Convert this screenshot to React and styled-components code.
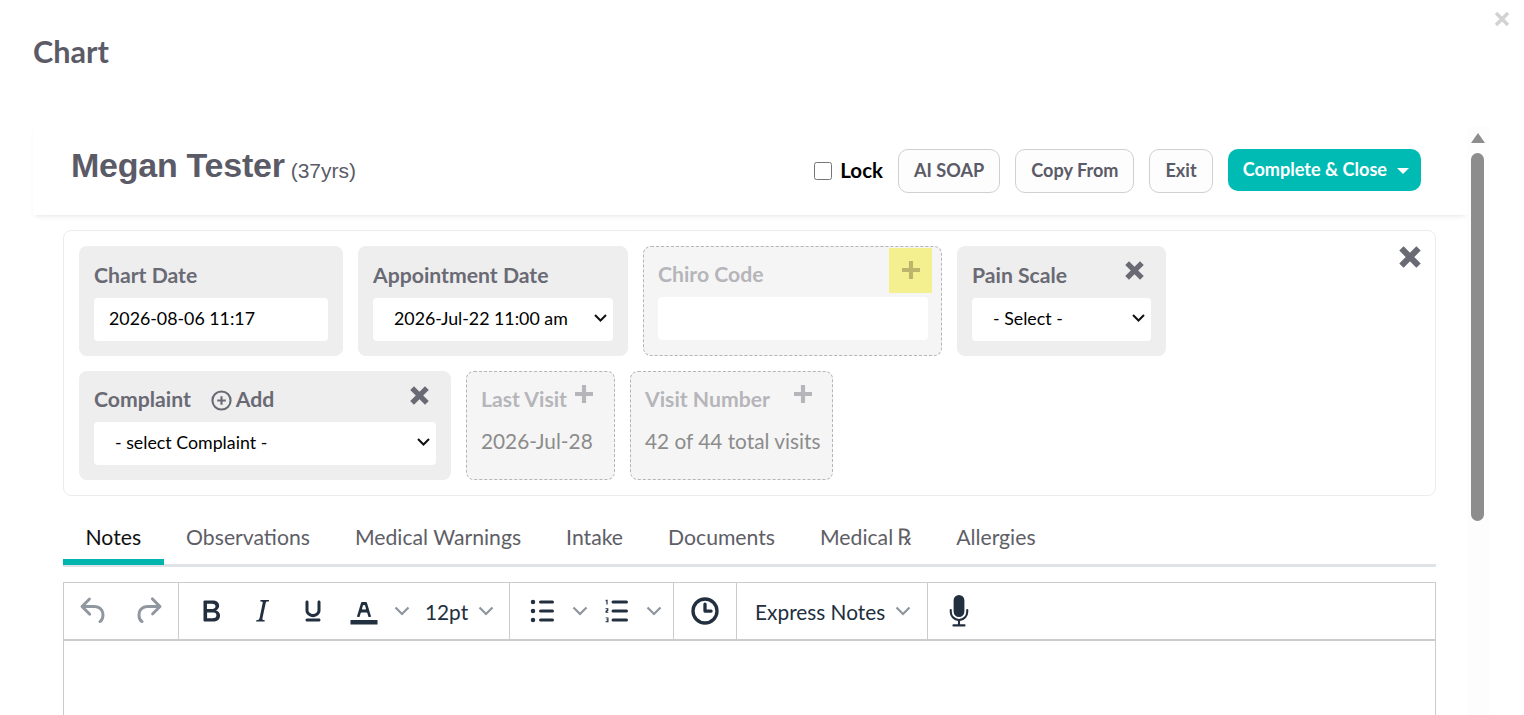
import styled, { createGlobalStyle } from "styled-components"

const GlobalStyle = createGlobalStyle`
    html, body {
        margin: 0;
        height: 715px;
        overflow: hidden;
        background: #fff;
        font-family: 'Lato', sans-serif;
    }
    * { box-sizing: border-box; }
`

const ICONS = {
    undo: "M6.4 8H12c3.7 0 6.2 2 6.8 5.1.6 2.7-.4 5.6-2.3 6.8a1 1 0 0 1-1-1.8c1.1-.6 1.8-2.7 1.4-4.6-.5-2.1-2.1-3.5-4.9-3.5H6.4l3.3 3.3a1 1 0 1 1-1.4 1.4l-5-5a1 1 0 0 1 0-1.4l5-5a1 1 0 0 1 1.4 1.4L6.4 8z",
    redo: "M17.6 10H12c-2.8 0-4.4 1.4-4.9 3.5-.4 2 .3 4 1.4 4.6a1 1 0 1 1-1 1.8c-2-1.2-2.9-4.1-2.3-6.8.6-3 3-5.1 6.8-5.1h5.6l-3.3-3.3a1 1 0 1 1 1.4-1.4l5 5a1 1 0 0 1 0 1.4l-5 5a1 1 0 0 1-1.4-1.4l3.3-3.3z",
    bold: "M7.8 19c-.3 0-.5 0-.6-.2l-.2-.5V5.7c0-.2 0-.4.2-.5l.6-.2h5c1.5 0 2.7.3 3.5 1 .7.6 1.1 1.4 1.1 2.5a3 3 0 0 1-.6 1.9c-.4.6-1 1-1.6 1.2.4.1.9.3 1.3.6s.8.7 1 1.2c.4.4.5 1 .5 1.6 0 1.3-.4 2.3-1.3 3-.8.7-2.1 1-3.8 1H7.8zm5-8.3c.6 0 1.2-.1 1.6-.5.4-.3.6-.7.6-1.3 0-1.1-.8-1.7-2.3-1.7H9.3v3.5h3.4zm.5 6c.7 0 1.3-.1 1.7-.4.4-.4.6-.9.6-1.5s-.2-1-.7-1.4c-.4-.3-1-.4-2-.4H9.4v3.8h4z",
    italic: "M16.7 4.7l-.1.9h-.3c-.6 0-1 0-1.4.3-.3.3-.4.6-.5 1.1l-2.1 9.8v.6c0 .5.4.8 1.4.8h.2l-.2.8H8l.2-.8h.2c1.1 0 1.8-.5 2-1.5l2-9.8.1-.5c0-.6-.4-.8-1.4-.8h-.3l.2-.9h5.8z",
    underline: "M16 5c.6 0 1 .4 1 1v5.5a4 4 0 0 1-.4 1.8l-1 1.4a5.3 5.3 0 0 1-5.5 1 5 5 0 0 1-1.6-1c-.5-.4-.8-.9-1.1-1.4a4 4 0 0 1-.4-1.8V6c0-.6.4-1 1-1s1 .4 1 1v5.5c0 .3 0 .6.2 1l.6.7a3.3 3.3 0 0 0 2.2.8 3.4 3.4 0 0 0 2.2-.8c.3-.2.4-.5.6-.8l.2-.9V6c0-.6.4-1 1-1zM8 17h8c.6 0 1 .4 1 1s-.4 1-1 1H8a1 1 0 0 1 0-2z",
    color: "M3 18h18v3H3zM8.7 16h-.8a.5.5 0 0 1-.5-.6l2.7-9c.1-.3.3-.4.5-.4h2.8c.2 0 .4.1.5.4l2.7 9a.5.5 0 0 1-.5.6h-.8a.5.5 0 0 1-.4-.4l-.7-2.2c0-.3-.3-.4-.5-.4h-3.4c-.2 0-.4.1-.5.4l-.7 2.2c0 .3-.2.4-.4.4zm2.6-7.6l-.6 2a.5.5 0 0 0 .5.6h1.6a.5.5 0 0 0 .5-.6l-.6-2c0-.3-.3-.4-.5-.4h-.4c-.2 0-.4.1-.5.4z",
    bullets: "M11 5h8a1 1 0 0 1 0 2h-8a1 1 0 0 1 0-2zm0 6h8a1 1 0 0 1 0 2h-8a1 1 0 0 1 0-2zm0 6h8a1 1 0 0 1 0 2h-8a1 1 0 0 1 0-2zM6 4.5a1.5 1.5 0 1 1 0 3 1.5 1.5 0 0 1 0-3zm0 6a1.5 1.5 0 1 1 0 3 1.5 1.5 0 0 1 0-3zm0 6a1.5 1.5 0 1 1 0 3 1.5 1.5 0 0 1 0-3z",
    numbers: "M10 5h9a1 1 0 0 1 0 2h-9a1 1 0 0 1 0-2zm0 6h9a1 1 0 0 1 0 2h-9a1 1 0 0 1 0-2zm0 6h9a1 1 0 0 1 0 2h-9a1 1 0 0 1 0-2zM5.4 4.5h1v3.2h-.8V5.4l-.5.2v-.7l.3-.4zM5 10.2h1.9v1.6l-1 .8h1v.6H5v-1.2l1.1-.9v-.3H5v-.6zM5 16.3h2v3.2H5v-.6h1.2v-.7H5.5v-.6h.7v-.7H5v-.6z",
    clock: "M12 2.9a9.1 9.1 0 1 1 0 18.2 9.1 9.1 0 0 1 0-18.2zm0 2.2a6.9 6.9 0 1 0 0 13.8 6.9 6.9 0 0 0 0-13.8zM10.9 7.5a1.1 1.1 0 0 1 2.2 0V11h3a1 1 0 0 1 0 2.1h-4.1a1.1 1.1 0 0 1-1.1-1.1V7.5z",
    mic: "M12 1.3a3.6 3.6 0 0 1 3.6 3.6v7.5a3.6 3.6 0 0 1-7.2 0V4.9a3.6 3.6 0 0 1 3.6-3.6zM6.5 10.6c.4 0 .7.3.7.7v1.2a4.8 4.8 0 0 0 9.6 0v-1.2a.7.7 0 0 1 1.4 0v1.2a6.2 6.2 0 0 1-5.5 6.1v2.3h3a.7.7 0 0 1 0 1.4H8.3a.7.7 0 0 1 0-1.4h3v-2.3a6.2 6.2 0 0 1-5.5-6.1v-1.2c0-.4.3-.7.7-.7z",
}

function EditorIcon({ name, muted }) {
    return (
        <IconSvg viewBox="0 0 24 24" $muted={muted}>
            <path d={ICONS[name]} />
        </IconSvg>
    )
}

function Chevron() {
    return (
        <ChevronSvg viewBox="0 0 16 10">
            <path d="M1.5 1.5 8 8l6.5-6.5" />
        </ChevronSvg>
    )
}

function Cross({ size }) {
    return (
        <CrossSvg viewBox="1 1 18 18" $size={size}>
            <path d="M3 3 17 17M17 3 3 17" />
        </CrossSvg>
    )
}

function Plus() {
    return (
        <PlusSvg viewBox="0 0 20 20">
            <path d="M10 0v20M0 10h20" />
        </PlusSvg>
    )
}

function Select({ label }) {
    return (
        <SelectWrap>
            <FieldSelect><option>{label}</option></FieldSelect>
            <SelectArrow viewBox="0 0 13 8">
                <path d="M1 1l5.5 5.5L12 1" />
            </SelectArrow>
        </SelectWrap>
    )
}

export default function App() {
    const tabs = ["Notes", "Observations", "Medical Warnings", "Intake", "Documents", "Medical", "Allergies"]

    return (
        <Page>
            <GlobalStyle />
            <CloseModal viewBox="0 0 16 16">
                <path d="M2 2 14 14M14 2 2 14" />
            </CloseModal>
            <PageTitle>Chart</PageTitle>
            <Body>
                <Content>
                    <Header>
                        <Name>
                            Megan Tester
                            <Age>(37yrs)</Age>
                        </Name>
                        <Actions>
                            <LockLabel>
                                <LockBox type="checkbox" />
                                Lock
                            </LockLabel>
                            <GhostButton>AI SOAP</GhostButton>
                            <GhostButton>Copy From</GhostButton>
                            <GhostButton>Exit</GhostButton>
                            <PrimaryButton>
                                Complete &amp; Close
                                <Caret />
                            </PrimaryButton>
                        </Actions>
                    </Header>

                    <Panel>
                        <PanelClose><Cross size={22} /></PanelClose>
                        <TileRow>
                            <Tile $width={264}>
                                <TileHead><TileLabel>Chart Date</TileLabel></TileHead>
                                <FieldInput defaultValue="2026-08-06 11:17" />
                            </Tile>
                            <Tile $width={270}>
                                <TileHead><TileLabel>Appointment Date</TileLabel></TileHead>
                                <Select label="2026-Jul-22 11:00 am" />
                            </Tile>
                            <Tile $width={299} $ghost>
                                <TileHead $short><TileLabel $ghost>Chiro Code</TileLabel></TileHead>
                                <FieldInput />
                                <Highlight><Plus /></Highlight>
                            </Tile>
                            <Tile $width={209}>
                                <TileHead>
                                    <TileLabel>Pain Scale</TileLabel>
                                    <TileIcon><Cross size={19} /></TileIcon>
                                </TileHead>
                                <Select label="- Select -" />
                            </Tile>
                        </TileRow>
                        <TileRow>
                            <Tile $width={372} $height={109}>
                                <TileHead $short>
                                    <TileLabel>Complaint</TileLabel>
                                    <AddLink>
                                        <AddCircle viewBox="0 0 22 22">
                                            <circle cx="11" cy="11" r="9.5" />
                                            <path d="M11 6.5v9M6.5 11h9" />
                                        </AddCircle>
                                        Add
                                    </AddLink>
                                    <TileIcon $top={1}><Cross size={19} /></TileIcon>
                                </TileHead>
                                <Select label="- select Complaint -" />
                            </Tile>
                            <Tile $width={149} $height={109} $ghost>
                                <TileHead $short>
                                    <TileLabel $ghost>Last Visit</TileLabel>
                                    <GhostPlus $right={8}><Plus /></GhostPlus>
                                </TileHead>
                                <TileValue>2026-Jul-28</TileValue>
                            </Tile>
                            <Tile $width={203} $height={109} $ghost>
                                <TileHead $short>
                                    <TileLabel $ghost>Visit Number</TileLabel>
                                    <GhostPlus $right={7}><Plus /></GhostPlus>
                                </TileHead>
                                <TileValue>42 of 44 total visits</TileValue>
                            </Tile>
                        </TileRow>
                    </Panel>

                    <Tabs>
                        {tabs.map((tab, i) => (
                            <Tab key={tab} $active={i === 0}>
                                {tab}
                                {tab === "Medical" && <RxMark>℞</RxMark>}
                            </Tab>
                        ))}
                    </Tabs>

                    <Editor>
                        <Toolbar>
                            <ToolGroup $pad="0 12px" $gap="18px">
                                <EditorIcon name="undo" muted />
                                <EditorIcon name="redo" muted />
                            </ToolGroup>
                            <ToolGroup $pad="0 15px 0 14px" $gap="15px">
                                <EditorIcon name="bold" />
                                <EditorIcon name="italic" />
                                <EditorIcon name="underline" />
                                <ToolSplit>
                                    <EditorIcon name="color" />
                                    <Chevron />
                                </ToolSplit>
                                <ToolSelect>12pt<Chevron /></ToolSelect>
                            </ToolGroup>
                            <ToolGroup $pad="0 11px 0 14px" $gap="10px">
                                <ToolSplit>
                                    <EditorIcon name="bullets" />
                                    <Chevron />
                                </ToolSplit>
                                <ToolSplit>
                                    <EditorIcon name="numbers" />
                                    <Chevron />
                                </ToolSplit>
                            </ToolGroup>
                            <ToolGroup $pad="0 13px" $gap="0">
                                <EditorIcon name="clock" />
                            </ToolGroup>
                            <ToolGroup $pad="0 16px 0 18px" $gap="0">
                                <ToolSelect>Express Notes<Chevron /></ToolSelect>
                            </ToolGroup>
                            <ToolGroup $pad="0 13px" $gap="0" $last>
                                <EditorIcon name="mic" />
                            </ToolGroup>
                        </Toolbar>
                        <EditArea />
                    </Editor>
                </Content>

                <ScrollTrack>
                    <ScrollArrow />
                    <ScrollThumb />
                </ScrollTrack>
            </Body>
        </Page>
    )
}

const Page = styled.div`
    position: relative;
    width: 1524px;
    height: 715px;
    overflow: hidden;
    background: #fff;
`

const CloseModal = styled.svg`
    position: absolute;
    top: 11px;
    right: 14px;
    width: 16px;
    height: 16px;
    fill: none;
    stroke: #d2d2d2;
    stroke-width: 3.4;
`

const PageTitle = styled.h1`
    margin: 0;
    height: 127px;
    padding: 33px 0 0 33px;
    font-size: 30.6px;
    line-height: 38px;
    font-weight: 700;
    color: #5b5b67;
`

const Body = styled.div`
    display: flex;
    align-items: flex-start;
`

const Content = styled.div`
    width: 1434px;
    margin-left: 33px;
`

const Header = styled.div`
    display: flex;
    justify-content: space-between;
    align-items: flex-start;
    height: 88px;
    padding: 20px 46px 0 38px;
    box-shadow: 0 3px 5px -2px rgba(0, 0, 0, 0.1);
`

const Name = styled.div`
    font-family: 'Liberation Sans', Arial, sans-serif;
    font-size: 34px;
    line-height: 36px;
    font-weight: 700;
    letter-spacing: -0.25px;
    color: #5b5b67;
`

const Age = styled.span`
    margin-left: 6px;
    font-size: 21px;
    font-weight: 400;
    letter-spacing: 0;
    vertical-align: -1px;
`

const Actions = styled.div`
    display: flex;
    align-items: flex-start;
    gap: 15px;
    margin-top: 2px;
`

const LockLabel = styled.label`
    display: flex;
    align-items: center;
    gap: 8px;
    height: 44px;
    padding-bottom: 2px;
    font-size: 20.5px;
    font-weight: 700;
    color: #000;
`

const LockBox = styled.input`
    width: 18px;
    height: 18px;
    margin: 2px 0 0;
`

const GhostButton = styled.button`
    height: 44px;
    padding: 0 15px 2px;
    font-family: 'Lato', sans-serif;
    font-size: 18.1px;
    font-weight: 700;
    color: #5b5b67;
    background: #fdfdfd;
    border: 1px solid #d0d0d0;
    border-radius: 10px;
`

const PrimaryButton = styled.button`
    display: flex;
    align-items: center;
    height: 42px;
    padding: 0 12px 2px 15px;
    font-family: 'Lato', sans-serif;
    font-size: 18.1px;
    font-weight: 700;
    color: #fff;
    background: #00bbb4;
    border: none;
    border-radius: 10px;
`

const Caret = styled.span`
    margin-left: 10px;
    border-top: 6px solid #fff;
    border-left: 6px solid transparent;
    border-right: 6px solid transparent;
    margin-top: 4px;
`

const Panel = styled.div`
    position: relative;
    display: flex;
    flex-direction: column;
    gap: 15px;
    width: 1373px;
    margin: 15px 0 0 30px;
    padding: 15px;
    border: 1px solid #ececec;
    border-radius: 8px;
`

const PanelClose = styled.div`
    position: absolute;
    top: 15px;
    right: 14px;
    line-height: 0;
`

const TileRow = styled.div`
    display: flex;
    gap: 15px;
`

const Tile = styled.div`
    position: relative;
    display: flex;
    flex-direction: column;
    width: ${props => props.$width}px;
    height: ${props => props.$height || 110}px;
    padding: ${props => (props.$ghost ? "14px 13px 14px 14px" : "15px")};
    border-radius: 8px;
    background: ${props => (props.$ghost ? "#f5f5f5" : "#eeeeee")};
    border: ${props => (props.$ghost ? "1px dashed #b5b5b5" : "none")};
`

const TileHead = styled.div`
    display: flex;
    align-items: flex-start;
    flex: none;
    height: 37px;
    margin-top: ${props => (props.$short ? "-1px" : "0")};
`

const TileLabel = styled.span`
    font-size: 21.2px;
    line-height: 28px;
    font-weight: 700;
    color: ${props => (props.$ghost ? "#b5b5ba" : "#6a6a75")};
`

const TileIcon = styled.span`
    margin-left: auto;
    margin-right: 7px;
    margin-top: ${props => props.$top || 0}px;
    line-height: 0;
`

const GhostPlus = styled.span`
    margin-left: auto;
    margin-right: ${props => props.$right}px;
    line-height: 0;
`

const Highlight = styled.div`
    position: absolute;
    top: 1px;
    right: 9px;
    display: flex;
    align-items: center;
    justify-content: center;
    width: 43px;
    height: 45px;
    padding-bottom: 1px;
    background: #f5f08f;

    svg {
        stroke: #bcb66c;
    }
`

const fieldStyle = `
    width: 100%;
    height: 43px;
    border: none;
    border-radius: 4px;
    background: #fff;
    color: #000;
    font-family: 'Lato', sans-serif;
    font-size: 17.8px;
    outline: none;
`

const FieldInput = styled.input`
    ${fieldStyle}
    padding: 0 15px 3px;
`

const SelectWrap = styled.div`
    position: relative;
    line-height: 0;
`

const FieldSelect = styled.select`
    ${fieldStyle}
    appearance: none;
    padding: 0 21px 3px;
`

const SelectArrow = styled.svg`
    position: absolute;
    top: 16px;
    right: 6px;
    width: 13px;
    height: 8px;
    fill: none;
    stroke: #111;
    stroke-width: 2;
    pointer-events: none;
`

const TileValue = styled.div`
    font-size: 20.8px;
    line-height: 38px;
    white-space: nowrap;
    color: #8c8c8c;
`

const AddLink = styled.span`
    display: flex;
    align-items: center;
    height: 28px;
    margin-left: 20px;
    gap: 4px;
    font-size: 21.2px;
    font-weight: 700;
    color: #6a6a75;
`

const AddCircle = styled.svg`
    width: 21px;
    height: 21px;
    margin-top: 2px;
    fill: none;
    stroke: #6a6a75;
    stroke-width: 2.2;
`

const CrossSvg = styled.svg`
    display: block;
    width: ${props => props.$size}px;
    height: ${props => props.$size}px;
    fill: none;
    stroke: #6a6a75;
    stroke-width: 5;
`

const PlusSvg = styled.svg`
    width: 18px;
    height: 18px;
    fill: none;
    stroke: #b5b5ba;
    stroke-width: 4.6;
`

const Tabs = styled.div`
    display: flex;
    width: 1373px;
    height: 56px;
    margin: 15px 0 0 30px;
    padding-top: 5px;
    border-bottom: 3px solid #dfe2e6;
`

const Tab = styled.div`
    height: 49px;
    padding: 0 22.5px;
    font-size: 21.2px;
    line-height: 42px;
    white-space: pre;
    color: ${props => (props.$active ? "#111" : "#5e5e66")};
    border-bottom: ${props => (props.$active ? "6px solid #00b5ad" : "none")};
`

const RxMark = styled.span`
    margin-left: 4px;
    font-family: 'DejaVu Serif', 'Liberation Serif', serif;
    font-size: 23px;
    line-height: 20px;
`

const Editor = styled.div`
    width: 1373px;
    margin: 15px 0 0 30px;
    border: 1px solid #cccccc;
`

const Toolbar = styled.div`
    display: flex;
    height: 58px;
    border-bottom: 2px solid #cccccc;
`

const ToolGroup = styled.div`
    display: flex;
    align-items: center;
    gap: ${props => props.$gap};
    padding: ${props => props.$pad};
    border-right: ${props => (props.$last ? "none" : "1px solid #cccccc")};
`

const ToolSplit = styled.div`
    display: flex;
    align-items: center;
    gap: 12px;
`

const ToolSelect = styled.div`
    display: flex;
    align-items: center;
    gap: 10px;
    font-size: 20.8px;
    color: #222f3e;
`

const IconSvg = styled.svg`
    flex: none;
    width: 36px;
    height: 36px;
    fill: ${props => (props.$muted ? "#9097a0" : "#222f3e")};
`

const ChevronSvg = styled.svg`
    flex: none;
    width: 16px;
    height: 10px;
    fill: none;
    stroke: #8f959d;
    stroke-width: 2.2;
`

const EditArea = styled.div`
    height: 300px;
    background: #fff;
`

const ScrollTrack = styled.div`
    flex: none;
    width: 22px;
    height: 600px;
    padding: 6px 4px 0;
    background: #fdfdfd;
`

const ScrollArrow = styled.div`
    width: 0;
    margin: 0 auto 10px;
    border-bottom: 10px solid #8d8d8d;
    border-left: 7px solid transparent;
    border-right: 7px solid transparent;
`

const ScrollThumb = styled.div`
    width: 13px;
    height: 368px;
    border-radius: 7px;
    background: #8d8d8d;
`
